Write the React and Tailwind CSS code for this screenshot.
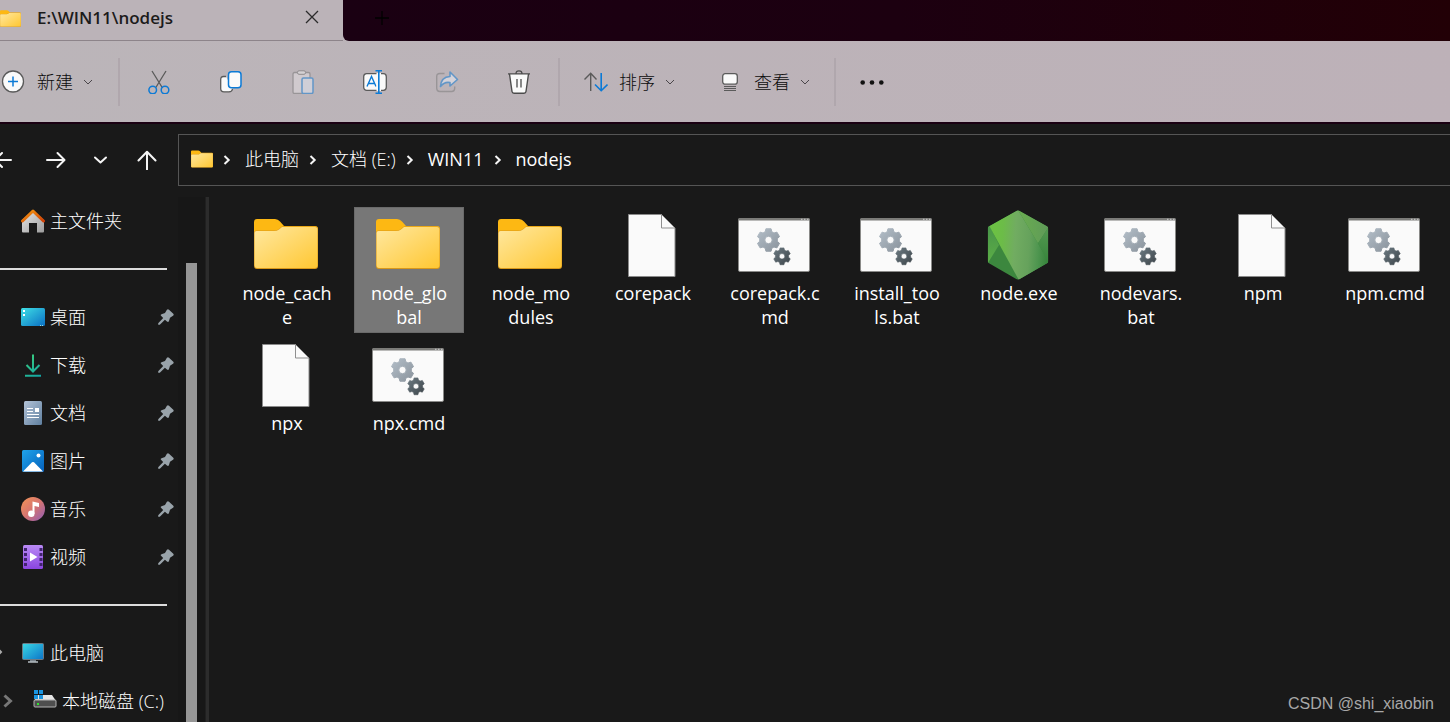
import React, { useState } from 'react';

const fontClass = "font-['Open_Sans','Noto_Sans_CJK_SC',sans-serif]";

/* ---------- shared shapes ---------- */

const FolderIcon = ({ className }) => (
  <svg viewBox="0 0 64 50" className={className} aria-hidden="true">
    <defs>
      <linearGradient id="folderFront" x1="0" y1="0" x2="1" y2="1">
        <stop offset="0" stopColor="#ffe8a0" />
        <stop offset="1" stopColor="#ffc732" />
      </linearGradient>
    </defs>
    <path d="M0 14V3Q0 0 3 0H21Q24 0 26 2.5L30 7H61Q64 7 64 10V20H0Z" fill="#fdb813" />
    <path d="M0 14Q0 11.5 2.5 11.5H20Q23 11.5 25 10L28 7.6H61Q64 7.6 64 10.5V47Q64 50 61 50H3Q0 50 0 47Z" fill="#d9981a" />
    <path d="M.5 14Q.5 12 2.5 12H20Q23 12 25 10.5L28 8H61Q63.5 8 63.5 10.5V46Q63.5 49 61 49H3Q.5 49 .5 46Z" fill="url(#folderFront)" />
  </svg>
);

const PageIcon = () => (
  <svg width="48" height="63" viewBox="0 0 48 63" aria-hidden="true">
    <path d="M.5 .5H33.5L47 14V62.5H.5Z" fill="#fafafa" stroke="#8a8a8a" />
    <path d="M33.5 .5V14H47Z" fill="#fafafa" stroke="#8f8f8f" />
  </svg>
);

// six-tooth gear outline around a centre, hole cut by evenodd
const gearPath = (cx, cy, r) => {
  const pts = [];
  for (let i = 0; i < 6; i++) {
    const mid = i * 60 - 90;
    [[-22, 0.74], [-13, 0.96], [13, 0.96], [22, 0.74]].forEach(([offset, k]) => {
      const a = ((mid + offset) * Math.PI) / 180;
      pts.push(`${(cx + Math.cos(a) * r * k).toFixed(2)} ${(cy + Math.sin(a) * r * k).toFixed(2)}`);
    });
  }
  const h = r * 0.31;
  return `M${pts.join('L')}ZM${cx - h} ${cy}a${h} ${h} 0 1 0 ${h * 2} 0a${h} ${h} 0 1 0 ${-h * 2} 0Z`;
};

const ScriptIcon = () => (
  <svg width="72" height="54" viewBox="0 0 72 54" aria-hidden="true">
    <defs>
      <linearGradient id="gearLight" x1="0" y1="0" x2="1" y2="1">
        <stop offset="0" stopColor="#b3bec8" />
        <stop offset="1" stopColor="#8a939c" />
      </linearGradient>
      <linearGradient id="gearDark" x1="0" y1="0" x2="1" y2="1">
        <stop offset="0" stopColor="#6c7a82" />
        <stop offset="1" stopColor="#3d454a" />
      </linearGradient>
    </defs>
    <rect x=".5" y=".5" width="71" height="53" rx="1.5" fill="#fafafa" stroke="#8a8a88" />
    <path d="M0 2.5V1.5Q0 0 1.5 0H70.5Q72 0 72 1.5V2.5Z" fill="#7b7b78" />
    <path d="M63 1.3h1.5M66 1.3h1.5M69 1.3h1.5" stroke="#d0d0d0" />
    <path d={gearPath(30.5, 22, 12)} fill="url(#gearLight)" stroke="url(#gearLight)" strokeLinejoin="round" fillRule="evenodd" />
    <path d={gearPath(44, 38.3, 9)} fill="url(#gearDark)" stroke="url(#gearDark)" strokeWidth=".6" strokeLinejoin="round" fillRule="evenodd" />
  </svg>
);

const NodeIcon = () => (
  <svg width="62" height="70" viewBox="112 45 184 210" aria-hidden="true">
    <defs>
      <linearGradient id="nodeBand" gradientUnits="userSpaceOnUse" x1="135" y1="120" x2="295" y2="130">
        <stop offset="0" stopColor="#6cc044" />
        <stop offset=".14" stopColor="#6cbc48" />
        <stop offset=".38" stopColor="#71ac61" />
        <stop offset=".65" stopColor="#66a25c" />
        <stop offset=".82" stopColor="#4f9650" />
        <stop offset="1" stopColor="#37853c" />
      </linearGradient>
      <linearGradient id="nodeRight" x1="0" y1="0" x2="1" y2="0">
        <stop offset="0" stopColor="#6aad50" />
        <stop offset="1" stopColor="#5f9a58" />
      </linearGradient>
      <linearGradient id="nodeFarRight" x1="0" y1="0" x2="0" y2="1">
        <stop offset="0" stopColor="#549951" />
        <stop offset="1" stopColor="#37853c" />
      </linearGradient>
      <linearGradient id="nodeSide" x1="0" y1="0" x2="0" y2="1">
        <stop offset="0" stopColor="#46924a" />
        <stop offset="1" stopColor="#5cae46" />
      </linearGradient>
      <clipPath id="nodeClip">
        <path d="M200 47Q204 45 208 47L291 94Q295 97 295 101V199Q295 203 291 205L208 253Q204 255 200 253L117 205Q113 203 113 199V101Q113 97 117 94Z" />
      </clipPath>
    </defs>
    <g clipPath="url(#nodeClip)">
      <rect x="112" y="45" width="184" height="210" fill="#3c873e" />
      <path d="M113 80L147 150L113 205Z" fill="url(#nodeSide)" />
      <path d="M118 93L204 45L264 145L296 203L207 256Z" fill="url(#nodeBand)" />
      <path d="M204 45L296 96L264 145Z" fill="url(#nodeRight)" />
      <path d="M296 96L264 145L296 203Z" fill="url(#nodeFarRight)" />
    </g>
  </svg>
);

const FILE_ICONS = {
  folder: <FolderIcon className="mb-0.5 h-[50px] w-16" />,
  page: <PageIcon />,
  script: <ScriptIcon />,
  node: <NodeIcon />,
};

const FILES = [
  { name: 'node_cache', lines: ['node_cach', 'e'], type: 'folder' },
  { name: 'node_global', lines: ['node_glo', 'bal'], type: 'folder' },
  { name: 'node_modules', lines: ['node_mo', 'dules'], type: 'folder' },
  { name: 'corepack', lines: ['corepack'], type: 'page' },
  { name: 'corepack.cmd', lines: ['corepack.c', 'md'], type: 'script' },
  { name: 'install_tools.bat', lines: ['install_too', 'ls.bat'], type: 'script' },
  { name: 'node.exe', lines: ['node.exe'], type: 'node' },
  { name: 'nodevars.bat', lines: ['nodevars.', 'bat'], type: 'script' },
  { name: 'npm', lines: ['npm'], type: 'page' },
  { name: 'npm.cmd', lines: ['npm.cmd'], type: 'script' },
  { name: 'npx', lines: ['npx'], type: 'page' },
  { name: 'npx.cmd', lines: ['npx.cmd'], type: 'script' },
];

/* ---------- sidebar icons, all on a 24px box ---------- */

const Icon24 = ({ children }) => (
  <svg width="24" height="24" viewBox="0 0 24 24" fill="none" className="shrink-0" aria-hidden="true">
    {children}
  </svg>
);

const HomeIcon = () => (
  <Icon24>
    <defs>
      <linearGradient id="homeWall" x1="0" y1="0" x2="1" y2="1">
        <stop offset="0" stopColor="#e8e8e8" />
        <stop offset="1" stopColor="#9c9c9c" />
      </linearGradient>
      <linearGradient id="homeRoof" x1="0" y1="0" x2="1" y2="1">
        <stop offset="0" stopColor="#f59a12" />
        <stop offset="1" stopColor="#cf3f05" />
      </linearGradient>
    </defs>
    <path d="M1 11L12 1.5L23 11V22.5Q23 23.5 22 23.5H16V14H8V23.5H2Q1 23.5 1 22.5Z" fill="url(#homeWall)" />
    <path d="M1.5 12L12 2L22.5 12" stroke="url(#homeRoof)" strokeWidth="3" strokeLinecap="round" strokeLinejoin="round" />
  </Icon24>
);

const DesktopIcon = () => (
  <Icon24>
    <defs>
      <linearGradient id="desk" x1="0" y1="0" x2="1" y2="1">
        <stop offset="0" stopColor="#3fe0e6" />
        <stop offset="1" stopColor="#0a6fc4" />
      </linearGradient>
    </defs>
    <rect x="0" y="3" width="24" height="18" rx="1.5" fill="url(#desk)" />
    <path d="M2 5h2v2H2zM2 9h2v2H2z" fill="#fff" />
    <path d="M19 20.5h1M21 20.5h1" stroke="#9dd" />
  </Icon24>
);

const DownloadIcon = () => (
  <Icon24>
    <defs>
      <linearGradient id="down" gradientUnits="userSpaceOnUse" x1="4" y1="1" x2="20" y2="23">
        <stop offset="0" stopColor="#3fd27a" />
        <stop offset="1" stopColor="#12a5a5" />
      </linearGradient>
    </defs>
    <path d="M12 1.5V18M5.5 12L12 18.5L18.5 12M4 22.8H20" stroke="url(#down)" strokeWidth="2" />
  </Icon24>
);

const DocumentIcon = () => (
  <Icon24>
    <defs>
      <linearGradient id="docs" x1="0" y1="0" x2="1" y2="1">
        <stop offset="0" stopColor="#b4c4d8" />
        <stop offset="1" stopColor="#5f7f9f" />
      </linearGradient>
    </defs>
    <rect x="3" y="0" width="18" height="24" rx="1.5" fill="url(#docs)" />
    <path d="M6 7.5h6M6 10.5h6M6 13.5h12M6 16.5h12" stroke="#fff" />
    <path d="M14 7h4v4h-4z" fill="#fff" />
  </Icon24>
);

const PictureIcon = () => (
  <Icon24>
    <defs>
      <linearGradient id="pics" x1="0" y1="0" x2="1" y2="1">
        <stop offset="0" stopColor="#1fa4ec" />
        <stop offset="1" stopColor="#0560ba" />
      </linearGradient>
    </defs>
    <rect x="1" y="1" width="22" height="22" rx="1.5" fill="url(#pics)" />
    <path d="M2 22.5L11 13.3Q12 12.5 13 13.3L22 22.5Z" fill="#fff" />
    <circle cx="17.5" cy="6.5" r="2" fill="#fff" />
  </Icon24>
);

const MusicIcon = () => (
  <Icon24>
    <defs>
      <linearGradient id="music" x1="0" y1="0" x2="1" y2="1">
        <stop offset="0" stopColor="#f39556" />
        <stop offset=".5" stopColor="#d67470" />
        <stop offset="1" stopColor="#8e5cb8" />
      </linearGradient>
    </defs>
    <circle cx="12" cy="12" r="12" fill="url(#music)" />
    <path d="M11.5 4.5L18 6V10L13.5 9V17H11.5Z" fill="#fff" />
    <circle cx="10.3" cy="16.8" r="3.2" fill="#fff" />
  </Icon24>
);

const VideoIcon = () => (
  <Icon24>
    <defs>
      <linearGradient id="video" x1="0" y1="0" x2="0" y2="1">
        <stop offset="0" stopColor="#b98af5" />
        <stop offset="1" stopColor="#8a45e0" />
      </linearGradient>
    </defs>
    <rect x="2" y="0" width="20" height="24" rx="1.5" fill="url(#video)" />
    <path d="M4.5 3V23M20 3V23" stroke="#41246f" strokeWidth="3" strokeDasharray="3 2" />
    <path d="M9 7.5L16.5 12L9 16.5Z" fill="#fff" />
  </Icon24>
);

const ComputerIcon = () => (
  <Icon24>
    <defs>
      <linearGradient id="screen" x1="0" y1="0" x2="1" y2="1">
        <stop offset="0" stopColor="#3ad8e4" />
        <stop offset="1" stopColor="#0c74c8" />
      </linearGradient>
    </defs>
    <path d="M9 18h6v3H9z" fill="#79828a" />
    <rect x="1.5" y="2.5" width="21" height="16" rx="1" fill="url(#screen)" stroke="#6d7a84" />
    <path d="M7 21h10" stroke="#b5bcc2" strokeWidth="1.5" />
  </Icon24>
);

const DiskIcon = () => (
  <Icon24>
    <path d="M5 6H19L23 12H1Z" fill="#e6e6e6" />
    <rect x="1" y="11" width="22" height="7" rx="1" fill="#4e4e4e" stroke="#b3b3b3" />
    <path d="M4 14h2v2H4z" fill="#2fe32f" />
    <path d="M1 1h4v4H1zM6 1h4v4H6zM1 6h4v4H1zM6 6h4v4H6z" fill="#1b95e0" />
  </Icon24>
);

const PinIcon = () => (
  <svg width="16" height="16" viewBox="0 0 16 16" className="ml-auto mr-1" aria-hidden="true">
    <path d="M8.9 .8Q9.9 -.2 11 .7L15.3 4.8Q16.2 5.8 15 6.7L12 8.8L10.9 12.3Q10.2 13.7 9 12.6L6.9 10.8L1.8 15.8H.2V14.2L5.2 9.1L3 6.8Q2.1 5.8 3.5 5.2L7 4Z" fill="#99a3aa" />
  </svg>
);

const PLACES = [
  { label: '桌面', Icon: DesktopIcon },
  { label: '下载', Icon: DownloadIcon },
  { label: '文档', Icon: DocumentIcon },
  { label: '图片', Icon: PictureIcon },
  { label: '音乐', Icon: MusicIcon },
  { label: '视频', Icon: VideoIcon },
];

const Divider = () => (
  <div className="flex h-12 items-center pr-[11px]">
    <hr className="w-full border-0 border-t-2 border-[#dcdcdc]" />
  </div>
);

const SmallChevron = () => (
  <svg width="10" height="10" viewBox="0 0 10 10" fill="none" stroke="#4a464a" aria-hidden="true">
    <path d="M1 3L5 7L9 3" />
  </svg>
);

/* ---------- command bar ---------- */

const EDIT_ACTIONS = [
  {
    label: '剪切',
    icon: (
      <>
        <path d="M5 1L15.5 18M19 1L8.500 18" stroke="#5a5a5a" strokeWidth="1.3" />
        <circle cx="5.7" cy="20" r="3.8" stroke="#0b7ad6" strokeWidth="1.5" />
        <circle cx="18" cy="20" r="3.8" stroke="#0b7ad6" strokeWidth="1.5" />
      </>
    ),
  },
  {
    label: '复制',
    icon: (
      <>
        <path d="M7 6.5H4.5Q1.7 6.5 1.7 9.5V18.5Q1.7 21.8 5 21.8H10Q13 21.8 13.5 19" fill="#fafafa" stroke="#5a5a5a" strokeWidth="1.3" />
        <rect x="9.5" y="1.7" width="12.5" height="16" rx="3" fill="#fafafa" stroke="#0b7ad6" strokeWidth="1.5" />
      </>
    ),
  },
  {
    label: '粘贴',
    icon: (
      <g opacity=".5">
        <rect x="2" y="2.5" width="17" height="21" rx="1.5" fill="#e5e0e4" stroke="#777" strokeWidth="1.3" />
        <rect x="6.5" y=".8" width="8" height="3.5" rx="1.5" fill="#eee" stroke="#666" />
        <rect x="11" y="8" width="11" height="15.5" rx="1.5" fill="#e5eaf5" stroke="#0b7ad6" strokeWidth="1.5" />
      </g>
    ),
  },
  {
    label: '重命名',
    icon: (
      <>
        <rect x=".7" y="3.7" width="22.6" height="16.6" rx="3" fill="#fafafa" stroke="#5a5a5a" strokeWidth="1.3" />
        <path d="M4 16.5L8.5 6.5L13 16.5M5.6 13.5H11.4" stroke="#0b7ad6" strokeWidth="1.4" />
        <path d="M13.5 3H18V21H13.5" fill="#fafafa" />
        <path d="M12.5 .8H19M12.5 23.2H19M15.8 .8V23.2" stroke="#0b7ad6" strokeWidth="1.6" />
      </>
    ),
  },
  {
    label: '共享',
    icon: (
      <g opacity=".5">
        <path d="M9.5 3.5H5Q1.7 3.5 1.7 6.5V18Q1.7 21.5 5 21.5H16.5Q19.7 21.5 19.7 18V16.5" stroke="#777" strokeWidth="1.4" />
        <path d="M15 2L22.5 9.5L15 16V12.5Q9 11.5 5.5 16.5Q6 7 15 6.5Z" fill="#eef2fb" stroke="#0b7ad6" strokeWidth="1.6" strokeLinejoin="round" />
      </g>
    ),
  },
  {
    label: '删除',
    icon: (
      <>
        <path d="M2.5 4L5 21.5Q5.3 23.2 7 23.2H17Q18.7 23.2 19 21.5L21.5 4" fill="#fafafa" stroke="#4c4c4c" strokeWidth="1.4" />
        <path d="M1 3.8H23M9 3.5Q9 .8 12 .8Q15 .8 15 3.5M10 9V17.5M14 9V17.5" stroke="#4c4c4c" strokeWidth="1.3" />
      </>
    ),
  },
];

const BarSeparator = () => <span className="h-12 w-0.5 shrink-0 bg-[#b0a7ad]" />;

function CommandBar() {
  return (
    <div className="flex h-[83px] shrink-0 items-center border-b-2 border-[#1a0012] bg-gradient-to-r from-[#bbb5b9] to-[#bdb1b8] text-lg font-light text-[#0c0c0c]">
      <button type="button" className="flex w-[118px] shrink-0 items-center">
        <svg width="25" height="24" viewBox="0 0 25 24" fill="none" aria-hidden="true">
          <circle cx="13" cy="11.5" r="10.5" fill="#fafafa" stroke="#5a5a5a" strokeWidth="1.3" />
          <path d="M13 6.5V16.5M8 11.5H18" stroke="#0b7ad6" strokeWidth="1.5" />
        </svg>
        <span className="ml-3 mr-2.5">新建</span>
        <SmallChevron />
      </button>
      <BarSeparator />
      <div className="flex shrink-0 px-[3px]">
        {EDIT_ACTIONS.map(({ label, icon }) => (
          <button key={label} type="button" aria-label={label} className="flex w-[72px] justify-center">
            <svg width="24" height="24" viewBox="0 0 24 24" fill="none">{icon}</svg>
          </button>
        ))}
      </div>
      <BarSeparator />
      <button type="button" className="ml-6 flex shrink-0 items-center">
        <svg width="24" height="20" viewBox="0 0 24 20" fill="none" strokeWidth="1.4" aria-hidden="true">
          <path d="M6.7 19V1.5M.5 7.5L6.7 1.3L12.5 7.5" stroke="#5a5a5a" />
          <path d="M17.2 1V18.5M11 12.5L17.2 18.7L23.5 12.5" stroke="#0b7ad6" strokeWidth="1.6" />
        </svg>
        <span className="ml-[11px] mr-2.5">排序</span>
        <SmallChevron />
      </button>
      <button type="button" className="ml-[47px] flex shrink-0 items-center">
        <svg width="16" height="20" viewBox="0 0 16 20" fill="none" stroke="#5a5a5a" aria-hidden="true">
          <rect x=".7" y="1.7" width="14.6" height="10.5" rx="2.5" fill="#fafafa" strokeWidth="1.3" />
          <path d="M2 14.5H14M2 16.5H14M2 18.5H14" />
        </svg>
        <span className="ml-4 mr-2.5">查看</span>
        <SmallChevron />
      </button>
      <span className="w-6" />
      <BarSeparator />
      <button type="button" aria-label="更多" className="ml-6">
        <svg width="24" height="6" viewBox="0 0 24 6" fill="#111">
          <circle cx="2.7" cy="3.5" r="2.3" />
          <circle cx="12" cy="3.5" r="2.3" />
          <circle cx="21.3" cy="3.5" r="2.3" />
        </svg>
      </button>
    </div>
  );
}

/* ---------- navigation + address ---------- */

const NavArrow = ({ label, d }) => (
  <button type="button" aria-label={label} className="shrink-0">
    <svg width="20" height="20" viewBox="0 0 20 20" fill="none" stroke="#f5f5f5" strokeWidth="2" strokeLinecap="round" strokeLinejoin="round">
      <path d={d} />
    </svg>
  </button>
);

const CrumbChevron = () => (
  <svg width="8" height="10" viewBox="0 0 8 10" fill="none" stroke="#f5f5f5" strokeWidth="2" aria-hidden="true">
    <path d="M1.5 1L5.7 5L1.5 9" />
  </svg>
);

const CRUMBS = [
  { label: '此电脑', weight: 'font-light' },
  { label: '文档 (E:)', weight: 'font-light' },
  { label: 'WIN11', weight: 'font-normal' },
  { label: 'nodejs', weight: 'font-normal' },
];

function AddressRow() {
  return (
    <div className="flex h-[73px] shrink-0 items-start pt-2.5">
      <nav className="-ml-[7px] flex h-[52px] w-[185px] shrink-0 items-center">
        <NavArrow label="后退" d="M18 10H2M9 3L2 10L9 17" />
        <span className="w-[33px]" />
        <NavArrow label="前进" d="M1 10H18M11.5 3L18.5 10L11.5 17" />
        <span className="w-6" />
        <NavArrow label="最近" d="M5 7.5L10.5 12.5L16 7.5" />
        <span className="w-[27px]" />
        <NavArrow label="向上" d="M10 19.5V2M1.5 10.5L10 1.8L18.5 10.5" />
      </nav>
      <div className="flex h-[52px] flex-1 items-center border border-r-0 border-[#555] pb-0.5 pl-3 text-lg">
        <FolderIcon className="h-[18px] w-[22px]" />
        <div className="flex items-center">
          {CRUMBS.map(({ label, weight }) => (
            <React.Fragment key={label}>
              <span className="flex w-8 justify-center pr-1 pt-0.5"><CrumbChevron /></span>
              <a href="#" className={`whitespace-pre ${weight}`}>{label}</a>
            </React.Fragment>
          ))}
        </div>
      </div>
    </div>
  );
}

function Sidebar() {
  return (
    <aside className="flex shrink-0 overflow-hidden">
      <nav className="w-[178px] text-lg font-light">
        <a href="#" className="flex h-12 items-center gap-[5px] pl-[21px]"><HomeIcon />主文件夹</a>
        <Divider />
        {PLACES.map(({ label, Icon }) => (
          <a key={label} href="#" className="flex h-12 items-center gap-[5px] pl-[21px]">
            <Icon />
            {label}
            <PinIcon />
          </a>
        ))}
        <Divider />
        <a href="#" className="flex h-12 items-center gap-[5px]">
          <span className="flex items-center">
            <svg width="21" height="14" viewBox="0 0 21 14" fill="none" stroke="#aaa" strokeWidth="2" aria-hidden="true">
              <path d="M-4 1L1 6L-4 11" />
            </svg>
            <ComputerIcon />
          </span>
          此电脑
        </a>
        <a href="#" className="flex h-12 items-center gap-[5px] whitespace-nowrap">
          <span className="flex items-center">
            <svg width="33" height="14" viewBox="0 0 33 14" fill="none" stroke="#777" strokeWidth="3" aria-hidden="true">
              <path d="M4.5 1.5L10.5 7L4.5 12.5" />
            </svg>
            <DiskIcon />
          </span>
          本地磁盘 (C:)
        </a>
      </nav>
      <div className="flex w-[27px] bg-[#171717] pl-2 pt-[66px]">
        <div className="w-[11px] bg-[#969696]" />
      </div>
      <div className="w-1 border-l border-[#202020] bg-[#2c2c2c]" />
    </aside>
  );
}

export default function App() {
  const [selected, setSelected] = useState('node_global');

  return (
    <div className={`relative flex h-screen flex-col overflow-hidden bg-[#191919] text-white ${fontClass}`}>
      {/* Tab strip */}
      <div className="flex h-[41px] shrink-0 bg-[#bbb3b8]">
        <div className="flex w-[343px] shrink-0 items-center border-b border-[#8d848a] pb-1 text-[#1b1b1b]">
          <FolderIcon className="h-[17px] w-[21px]" />
          <span className="ml-4 text-[17px] font-semibold">E:\WIN11\nodejs</span>
          <button type="button" aria-label="关闭标签页" className="ml-auto mr-6 pb-0.5">
            <svg width="14" height="14" viewBox="0 0 14 14" stroke="#2b2b2b" strokeWidth="1.3">
              <path d="M1 1L13 13M13 1L1 13" />
            </svg>
          </button>
        </div>
        <div className="flex flex-1 items-center rounded-bl-md bg-gradient-to-r from-[#1a0012] via-[#1c0010] to-[#220006] pb-1.5 pl-8">
          <button type="button" aria-label="新建标签页">
            <svg width="14" height="14" viewBox="0 0 14 14" stroke="#000" strokeWidth="1.3">
              <path d="M7 0V14M0 7H14" />
            </svg>
          </button>
        </div>
      </div>

      <CommandBar />
      <AddressRow />

      <div className="flex min-h-0 flex-1">
        <Sidebar />
        <main className="flex flex-1 flex-wrap content-start gap-x-3 gap-y-1 pl-[23px] pt-2.5">
          {FILES.map((file) => (
            <button
              key={file.name}
              type="button"
              title={file.name}
              onClick={() => setSelected(file.name)}
              className={`flex h-[126px] w-[110px] flex-col items-center pt-0.5 text-lg leading-6 ${selected === file.name ? 'bg-[#777777] outline outline-1 -outline-offset-1 outline-[#6a6a6a]' : ''}`}
            >
              <span className="flex h-[72px] items-center pr-0.5">{FILE_ICONS[file.type]}</span>
              {file.lines.map((line) => (
                <span key={line} className="block">{line}</span>
              ))}
            </button>
          ))}
        </main>
      </div>

      <span className="absolute bottom-2 right-4 font-['Liberation_Sans',sans-serif] text-base leading-5 text-[#a8a8a8]">CSDN @shi_xiaobin</span>
    </div>
  );
}
